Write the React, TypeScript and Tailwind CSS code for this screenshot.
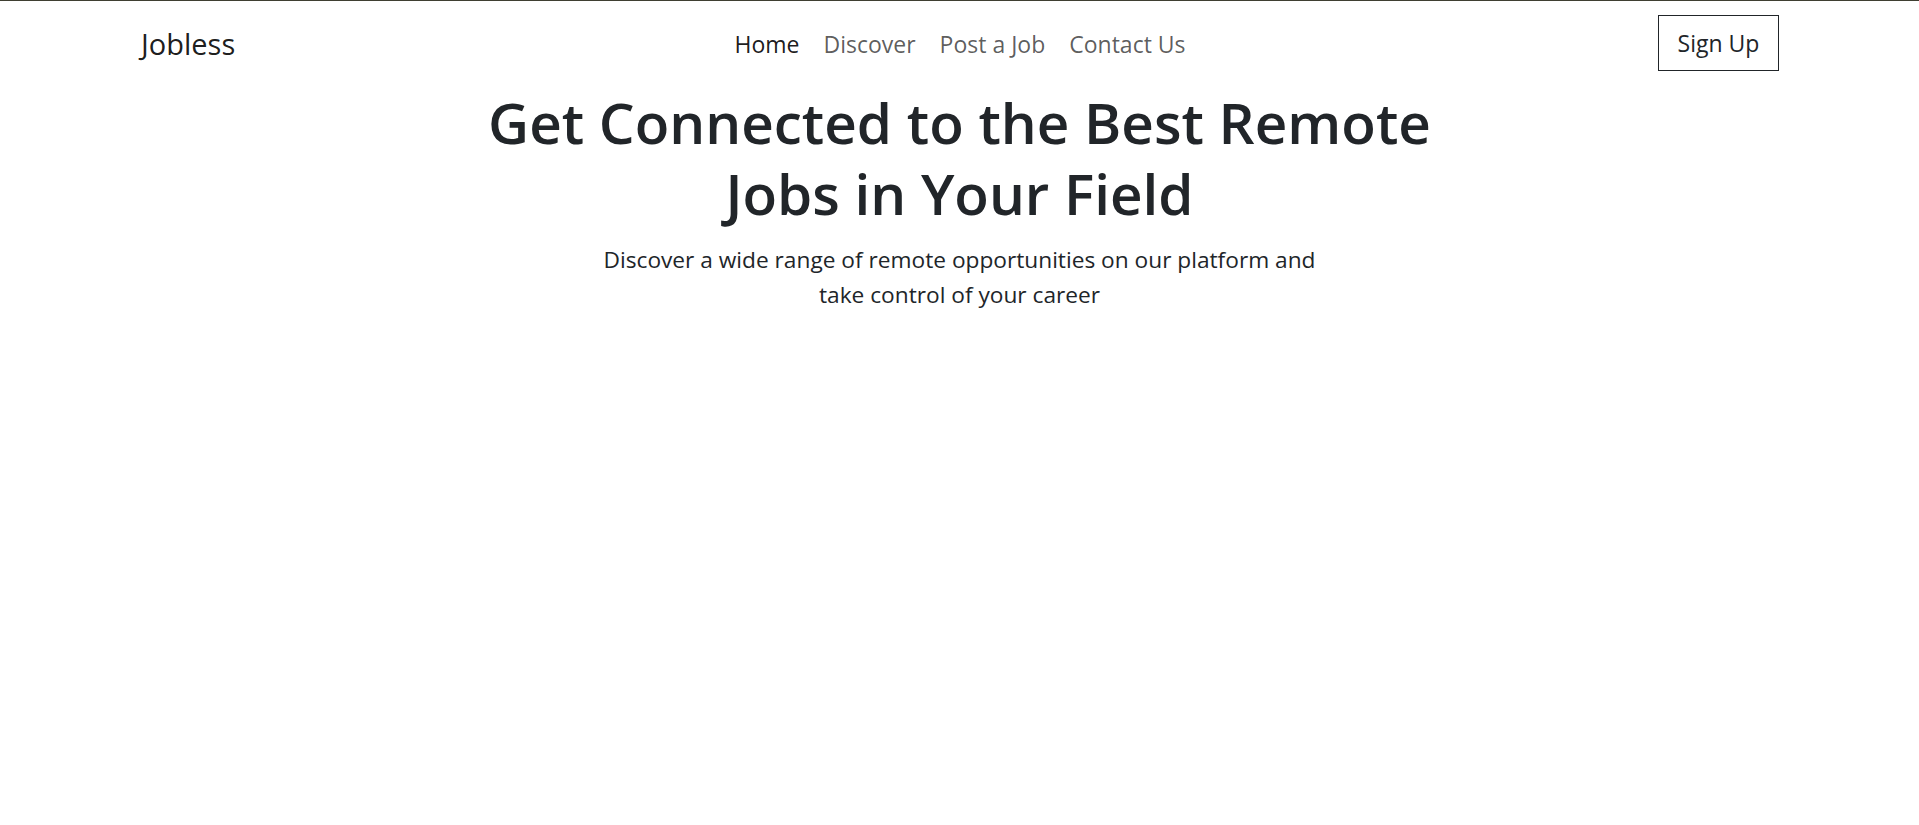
export default function App() {
  const links = ['Home', 'Discover', 'Post a Job', 'Contact Us']

  return (
    <div className="min-h-screen bg-white border-t border-[#3f3f32] font-['Open_Sans',sans-serif] text-[#212529]">
      <nav className="grid grid-cols-[1fr_auto_1fr] items-center h-[86px] pl-[141px] pr-[140px]">
        <a href="#" className="text-[29px] leading-none text-black/90 justify-self-start -mt-[2px]">
          Jobless
        </a>
        <ul className="flex items-center gap-[24px]">
          {links.map((link, i) => (
            <li key={link}>
              <a
                href="#"
                className={i === 0 ? 'text-[23px] text-black/90' : 'text-[23px] text-black/65'}
              >
                {link}
              </a>
            </li>
          ))}
        </ul>
        <button className="justify-self-end h-[56px] w-[121px] pt-[2px] border border-[#212529] text-[23px] text-[#212529] -mt-[3px]">
          Sign Up
        </button>
      </nav>

      <header className="flex flex-col items-center text-center">
        <h1 className="max-w-[1000px] text-[56.6px] leading-[71px] font-semibold text-[#212529]">
          Get Connected to the Best Remote Jobs in Your Field
        </h1>
        <p className="mt-[13px] max-w-[760px] text-[22.7px] leading-[35px] text-[#212529]">
          Discover a wide range of remote opportunities on our platform and take control of your career
        </p>
      </header>
    </div>
  )
}
